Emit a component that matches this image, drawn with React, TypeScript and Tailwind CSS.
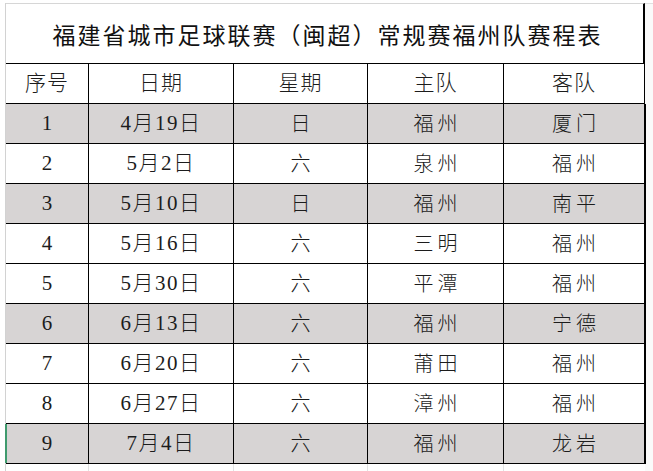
import React from "react";

const rows = [
  { n: "1", d: "4月19日", w: "日", h: "福州", a: "厦门", g: true },
  { n: "2", d: "5月2日", w: "六", h: "泉州", a: "福州", g: false },
  { n: "3", d: "5月10日", w: "日", h: "福州", a: "南平", g: true },
  { n: "4", d: "5月16日", w: "六", h: "三明", a: "福州", g: false },
  { n: "5", d: "5月30日", w: "六", h: "平潭", a: "福州", g: false },
  { n: "6", d: "6月13日", w: "六", h: "福州", a: "宁德", g: true },
  { n: "7", d: "6月20日", w: "六", h: "莆田", a: "福州", g: false },
  { n: "8", d: "6月27日", w: "六", h: "漳州", a: "福州", g: false },
  { n: "9", d: "7月4日", w: "六", h: "福州", a: "龙岩", g: true },
];

const font = {
  fontFamily: '"Liberation Serif", "Noto Sans CJK SC", serif',
};

export default function App() {
  return (
    <div
      className="w-[653px] h-[471px] bg-white pt-[3px] pl-[5px] overflow-hidden text-[#1c1c1c]"
      style={font}
    >
      <div className="flex">
        <div className="w-[640px] border-l border-[#d2d2d2]">
          <div className="h-[60px] border-t border-[#d6d6d6] border-r-2 border-r-black flex items-center justify-center pt-[8px] pl-[6px] text-[23px] tracking-[2px] text-[#111]">
            福建省城市足球联赛（闽超）常规赛福州队赛程表
          </div>
          <div className="grid grid-cols-[83px_145px_134px_136px_142px] border-t border-black">
            {["序号", "日期", "星期", "主队", "客队"].map((t, i) => (
              <div
                key={t}
                className={`h-[40px] flex items-center justify-center border-b border-black text-[21px] font-light tracking-[1px] ${
                  i === 4 ? "border-r-2" : "border-r"
                }`}
              >
                {t}
              </div>
            ))}
            {rows.map((r) => {
              const bg = r.g ? "bg-[#d7d4d4]" : "bg-white";
              const cells = [r.n, r.d, r.w, r.h, r.a];
              return cells.map((c, i) => (
                <div
                  key={r.n + "-" + i}
                  className={`relative h-[40px] flex items-center justify-center border-b border-black ${bg} ${
                    i === 4 ? "border-r-2" : "border-r"
                  } ${
                    i === 0
                      ? "text-[21px]"
                      : i === 1
                      ? "text-[21px] font-light tracking-[1.5px]"
                      : "text-[20px] font-light tracking-[4px] pl-[4px]"
                  }`}
                >
                  {r.n === "9" && i === 0 && (
                    <span className="absolute left-[-1px] top-0 bottom-0 w-[2px] bg-[#3f9a6d]" />
                  )}
                  {c}
                </div>
              ));
            })}
            {[0, 1, 2, 3, 4].map((i) => (
              <div key={"e" + i} className="h-[10px] border-r border-[#e2e2e2]" />
            ))}
          </div>
        </div>
        <div className="w-[8px] border-t border-[#e0e0e0] bg-[#fafafa]" />
      </div>
    </div>
  );
}
